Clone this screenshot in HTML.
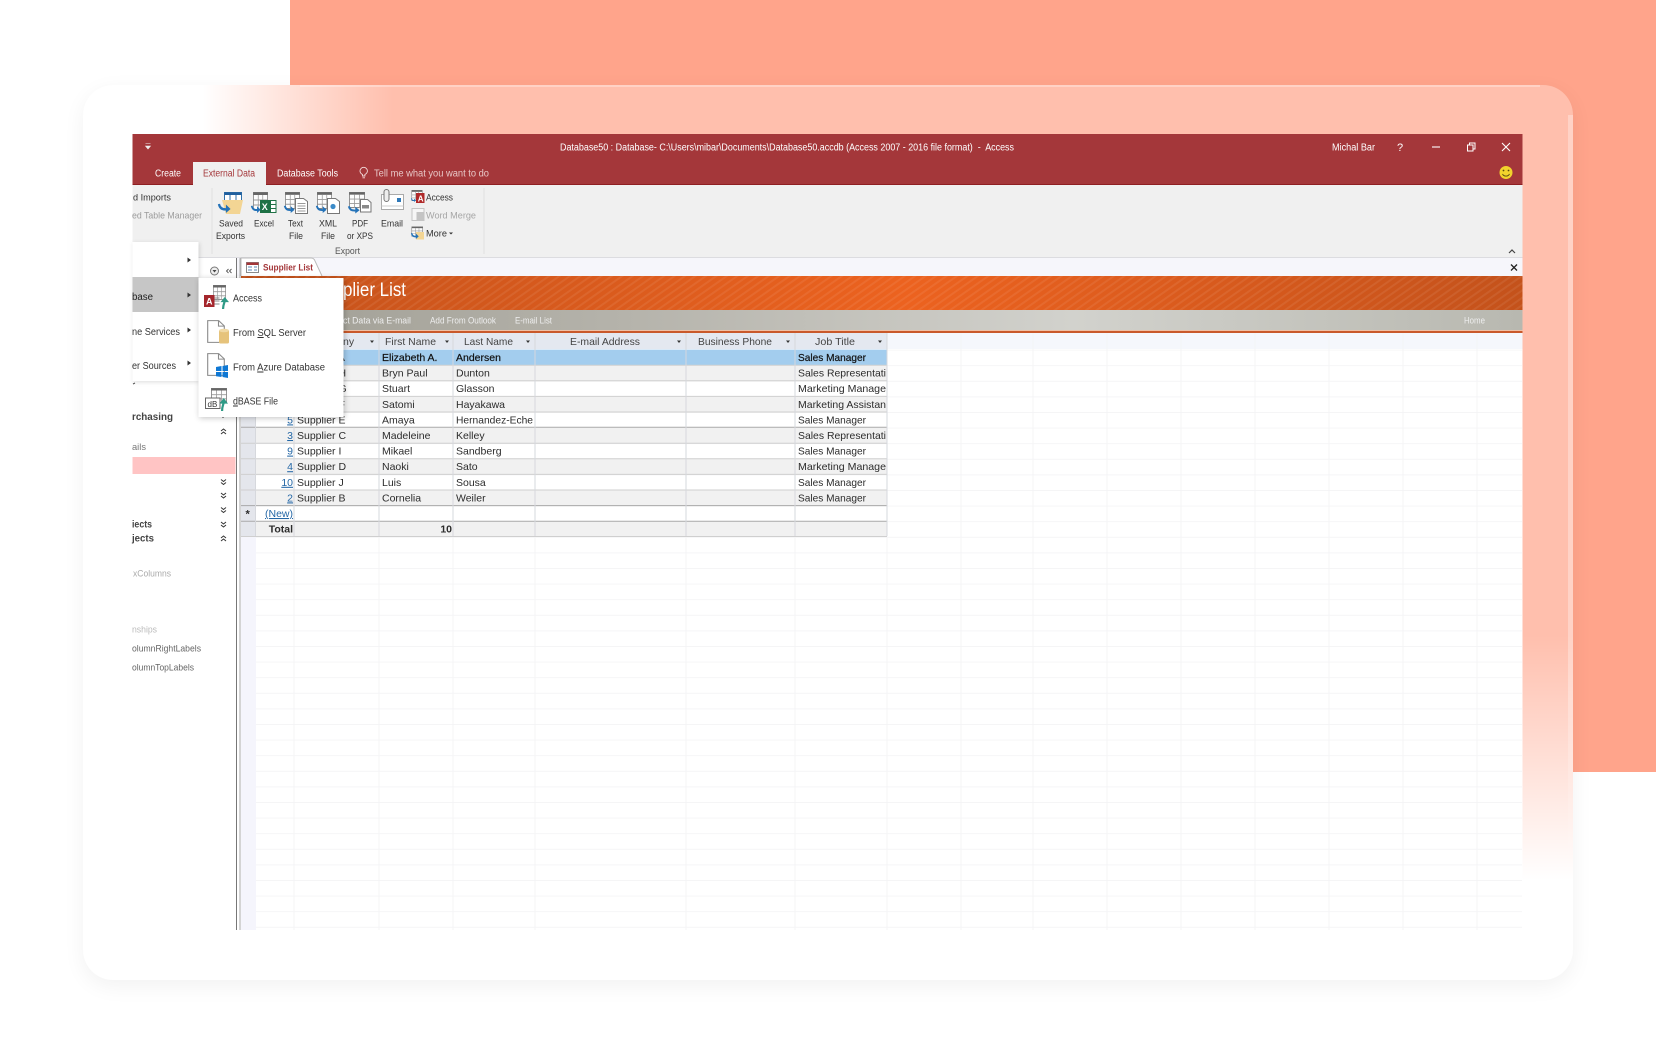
<!DOCTYPE html>
<html lang="en">
<head>
<meta charset="utf-8">
<title>Supplier List</title>
<style>
html,body{margin:0;padding:0;width:1656px;height:1062px;overflow:hidden;background:#fff}
#bg{position:absolute;left:290px;top:0;width:1366px;height:772px;background:#FFA48B}
#card{position:absolute;left:83px;top:85px;width:1490px;height:895px;border-radius:30px;
box-shadow:0 6px 22px rgba(0,0,0,.055);
background:
linear-gradient(to top,#fff 100px,rgba(255,255,255,0) 345px),
linear-gradient(to right,#fff 120px,rgba(255,255,255,0) 310px),
#FFBFAD}
#edge{position:absolute;left:1568px;top:115px;width:5px;height:770px;background:linear-gradient(to bottom,rgba(255,255,255,.3),rgba(255,255,255,.3) 75%,rgba(255,255,255,0))}
#edget{position:absolute;left:300px;top:85px;width:1240px;height:2px;background:rgba(255,255,255,.3)}
svg{position:absolute;left:0;top:0}
text{font-family:"Liberation Sans",Arial,sans-serif;font-size:10.5px;fill:#2c2c2c;white-space:pre}
.w{fill:#fff}
.r{font-size:9.5px;fill:#333}
.g{fill:#a3a3a3}
.h{fill:#444;font-size:10.5px}
.b{font-weight:bold}
.n{font-size:9.5px;fill:#444}
.l{fill:#2467a6;text-decoration:underline}
.m{font-size:10px;fill:#eee}
#all{filter:blur(.35px)}
</style>
</head>
<body>
<div id="bg"></div>
<div id="card"></div>
<div id="edge"></div>
<div id="edget"></div>
<svg width="1656" height="1062" viewBox="0 0 1656 1062" xmlns="http://www.w3.org/2000/svg">
<defs>
<linearGradient id="og"><stop offset="0" stop-color="#C4521B"/><stop offset=".52" stop-color="#EC621F"/><stop offset="1" stop-color="#C4521B"/></linearGradient>
<linearGradient id="gy"><stop offset="0" stop-color="#A09E94"/><stop offset=".3" stop-color="#B5B3AB"/><stop offset=".65" stop-color="#D2D2CD"/><stop offset="1" stop-color="#B8B8B0"/></linearGradient>
<pattern id="st" width="6" height="6" patternUnits="userSpaceOnUse" patternTransform="rotate(-35)"><rect width="6" height="2" fill="#fff" opacity=".07"/></pattern>
<pattern id="gr" width="74" height="15.6" patternUnits="userSpaceOnUse" y="349.6" x="0"><rect y="0" width="74" height="1" fill="#f5f5f6"/></pattern>
<symbol id="tb" viewBox="0 0 20 18" preserveAspectRatio="none" overflow="visible"><rect x=".5" y=".5" width="19" height="17" fill="#fdfdfd" stroke="#7a7a7a"/><rect x=".5" y=".5" width="19" height="2.500" fill="#666"/><path d="M.5 8h19M.5 13h19M7 3v15M13 3v15" stroke="#9a9a9a" fill="none"/></symbol>
<symbol id="ar" viewBox="0 0 14 10" preserveAspectRatio="none" overflow="visible"><path d="M1 1c1 5 5 6 10 5" stroke="#2472B8" stroke-width="2.400" fill="none"/><path d="M8.500 1.500l5 4.500-5 4z" fill="#2472B8"/></symbol>
<symbol id="up" viewBox="0 0 10 14" preserveAspectRatio="none" overflow="visible"><path d="M3 14C3 10 4 8 5 5" stroke="#2E9A86" stroke-width="2.600" fill="none"/><path d="M0 6l5-6 5 6z" fill="#2E9A86"/></symbol>
<symbol id="doc" viewBox="0 0 18 26" preserveAspectRatio="none" overflow="visible"><path d="M.7.7h11l5.600 6v18.600H.7z" fill="#fff" stroke="#8a8a8a" stroke-width="1.100"/><path d="M11.500.9v6h5.600" fill="none" stroke="#8a8a8a" stroke-width="1.100"/></symbol>
</defs>
<g id="all">
<!-- window base -->
<rect x="132.500" y="134" width="1390" height="796" fill="#fff"/>
<!-- title bar -->
<rect x="132.500" y="134" width="1390" height="51" fill="#A4373A"/>
<rect x="132.500" y="184" width="1390" height="1" fill="#8e1f22"/>
<path d="M145.500 143.500h5M145.500 146h5l-2.500 3z" fill="#eee" stroke="#eee" stroke-width=".6"/>
<text class="w" x="560" y="150.500" textLength="454" lengthAdjust="spacingAndGlyphs" style="font-size:10px">Database50 : Database- C:\Users\mibar\Documents\Database50.accdb (Access 2007 - 2016 file format)  -  Access</text>
<text class="w" x="1332" y="150.500" textLength="43" lengthAdjust="spacingAndGlyphs" style="font-size:10px">Michal Bar</text>
<text class="w" x="1397" y="151" style="font-size:11px">?</text>
<path d="M1432 147h8" stroke="#fff" stroke-width="1.100"/>
<path d="M1467.500 145h5.500v6h-5.500zM1469.500 145v-2h5.500v6h-2" stroke="#fff" fill="none" stroke-width="1"/>
<path d="M1502 143l8 8M1510 143l-8 8" stroke="#fff" stroke-width="1.100"/>
<circle cx="1506" cy="172.500" r="6.500" fill="#F2D32C"/><circle cx="1503.500" cy="170.500" r=".9" fill="#5a4a10"/><circle cx="1508.500" cy="170.500" r=".9" fill="#5a4a10"/><path d="M1502.500 174c1.500 2.800 5.500 2.800 7 0" stroke="#5a4a10" fill="none" stroke-width=".9"/>
<!-- tabs -->
<rect x="193" y="162" width="73" height="23.500" fill="#F0F0F0"/>
<text class="w" x="155" y="176.500" textLength="26" lengthAdjust="spacingAndGlyphs" style="font-size:10px">Create</text>
<text x="203" y="176.500" textLength="52" lengthAdjust="spacingAndGlyphs" style="font-size:10px;fill:#A4373A">External Data</text>
<text class="w" x="277" y="176.500" textLength="61" lengthAdjust="spacingAndGlyphs" style="font-size:10px">Database Tools</text>
<path d="M362.500 176v-1.500c-2-1-2.500-2.500-2.500-3.500a3.700 3.700 0 0 1 7.400 0c0 1-.5 2.500-2.500 3.500v1.500zM362.500 177.800h2.500" stroke="#f3dcdc" fill="none" stroke-width=".9"/>
<text x="374" y="176.500" textLength="115" lengthAdjust="spacingAndGlyphs" style="font-size:10px;fill:#E8C8C8">Tell me what you want to do</text>
<!-- ribbon -->
<rect x="132.500" y="185" width="1390" height="72" fill="#F0F0F0"/>
<rect x="132.500" y="257" width="1390" height="1" fill="#dcdce0"/>
<rect x="132.500" y="258" width="1390" height="18" fill="#F6F6FB"/>
<path d="M212 188v66M484 188v66" stroke="#e0e0e0"/>
<text class="r" x="133" y="200.500" textLength="38" lengthAdjust="spacingAndGlyphs">d Imports</text>
<text class="r g" x="132" y="218.500" textLength="70" lengthAdjust="spacingAndGlyphs" style="fill:#9b9b9b">ed Table Manager</text>
<!-- saved exports -->
<rect x="224.500" y="192.500" width="17" height="9" fill="#fff" stroke="#2F6FA8"/><rect x="224.500" y="192.500" width="17" height="2.500" fill="#1F5F9E"/><path d="M230 195v6M236 195v6" stroke="#2F6FA8"/>
<path d="M222 200h21l-3 14h-14z" fill="#F3D594"/>
<use href="#ar" x="218" y="203" width="13" height="10"/>
<!-- excel -->
<use href="#tb" x="253" y="192" width="15" height="18"/><rect x="260" y="200" width="10" height="13" fill="#1E7145"/><text x="261.800" y="210" style="font-size:9px;font-weight:bold;fill:#fff">X</text><path d="M270.500 200.500h5.500v12h-5.500zM270.500 204.500h5.500M270.500 208.500h5.500" stroke="#1E7145" fill="#fff"/><use href="#ar" x="251" y="205" width="10" height="8"/>
<!-- text -->
<use href="#tb" x="285" y="192" width="15" height="17"/><path d="M295.500 198.500h8l4 3v12h-12z" fill="#fff" stroke="#777"/><path d="M297.500 203.500h8M297.500 206h8M297.500 208.500h8M297.500 211h8" stroke="#999"/><use href="#ar" x="284" y="205" width="11" height="8"/>
<!-- xml -->
<use href="#tb" x="317" y="192" width="15" height="17"/><path d="M327.500 198.500h8l4 3v12h-12z" fill="#fff" stroke="#777"/><circle cx="333" cy="206.500" r="2.600" fill="#3B8BC9"/><use href="#ar" x="316" y="205" width="11" height="8"/>
<!-- pdf -->
<use href="#tb" x="349" y="192" width="16" height="16"/><path d="M360.500 199.500h7l3.500 3v9.500h-10.500z" fill="#fff" stroke="#777"/><rect x="362" y="205" width="7" height="3.500" fill="#888"/><use href="#ar" x="348" y="205.500" width="12" height="8"/>
<!-- email -->
<rect x="381.500" y="194.500" width="22" height="15" fill="#fff" stroke="#aaa"/><path d="M381.500 206h22" stroke="#ccc"/><rect x="397" y="198" width="4" height="4" fill="#2F79B9"/><path d="M384 196v-4a2.500 2.500 0 0 1 5 0v7a2.500 2.500 0 0 1-5 0v-3" fill="#eee" stroke="#777"/>
<!-- small ribbon -->
<use href="#tb" x="411.500" y="190" width="11" height="11"/><rect x="416" y="193" width="8.500" height="10" fill="#B02A2A"/><text x="417.800" y="201.500" style="font-size:8px;font-weight:bold;fill:#fff">A</text><use href="#ar" x="411" y="198" width="5" height="4"/>
<rect x="412" y="208.500" width="12" height="12" fill="#f6f6f6" stroke="#c4c4c4"/><rect x="416.500" y="212" width="7.500" height="9" fill="#c4c4c4"/>
<use href="#tb" x="411.500" y="226.500" width="11.500" height="10"/><rect x="416" y="232" width="8" height="7.500" fill="#F3D594"/><use href="#ar" x="411" y="232.500" width="8" height="6.500"/>
<text class="r" x="426" y="200.500" textLength="27" lengthAdjust="spacingAndGlyphs">Access</text>
<text class="r" x="426" y="218.500" textLength="50" lengthAdjust="spacingAndGlyphs" style="fill:#a5a5a5">Word Merge</text>
<text class="r" x="426" y="236.500" textLength="21" lengthAdjust="spacingAndGlyphs">More</text>
<path d="M449 232.500h4l-2 2z" fill="#333"/>
<text class="r" x="219" y="226.500" textLength="24" lengthAdjust="spacingAndGlyphs">Saved</text>
<text class="r" x="216" y="239" textLength="29" lengthAdjust="spacingAndGlyphs">Exports</text>
<text class="r" x="254" y="226.500" textLength="20" lengthAdjust="spacingAndGlyphs">Excel</text>
<text class="r" x="288" y="226.500" textLength="15" lengthAdjust="spacingAndGlyphs">Text</text>
<text class="r" x="289" y="239" textLength="14" lengthAdjust="spacingAndGlyphs">File</text>
<text class="r" x="319" y="226.500" textLength="18" lengthAdjust="spacingAndGlyphs">XML</text>
<text class="r" x="321" y="239" textLength="14" lengthAdjust="spacingAndGlyphs">File</text>
<text class="r" x="352" y="226.500" textLength="16" lengthAdjust="spacingAndGlyphs">PDF</text>
<text class="r" x="347" y="239" textLength="26" lengthAdjust="spacingAndGlyphs">or XPS</text>
<text class="r" x="381" y="226.500" textLength="22" lengthAdjust="spacingAndGlyphs">Email</text>
<text class="r" x="335" y="254" textLength="25" lengthAdjust="spacingAndGlyphs" style="fill:#555">Export</text>
<path d="M1509 253l3-3 3 3" stroke="#444" fill="none" stroke-width="1.200"/>
<path d="M1511 264.500l6 6M1517 264.500l-6 6" stroke="#222" stroke-width="1.300"/>
<!-- object tab -->
<path d="M241 276v-18h70q3 0 4 3l7 15" fill="#fff" stroke="#bbb"/>
<rect x="246.500" y="262.500" width="12" height="10" fill="#fff" stroke="#8a8a8a"/><rect x="246.500" y="262.500" width="12" height="2.500" fill="#A4373A"/><path d="M248 267h4M254 267h3M248 270h4M254 270h3" stroke="#5b87b5"/>
<text class="b" x="263" y="270.500" textLength="50" lengthAdjust="spacingAndGlyphs" style="font-size:9.500px;fill:#A4373A">Supplier List</text>
<!-- form header -->
<rect x="241" y="276" width="1281.500" height="34" fill="url(#og)"/>
<rect x="241" y="276" width="1281.500" height="34" fill="url(#st)"/>
<text x="343" y="296" textLength="63" lengthAdjust="spacingAndGlyphs" style="font-size:19px;fill:#fff">plier List</text>
<rect x="241" y="310" width="1281.500" height="20" fill="url(#gy)"/>
<rect x="241" y="330" width="1281.500" height="1" fill="#EFC0A5"/>
<rect x="241" y="331" width="1281.500" height="2" fill="#C9592B"/>
<text class="m" x="343" y="323.500" textLength="68" lengthAdjust="spacingAndGlyphs" style="font-size:9px">ct Data via E-mail</text>
<text class="m" x="430" y="323.500" textLength="66" lengthAdjust="spacingAndGlyphs" style="font-size:9px">Add From Outlook</text>
<text class="m" x="515" y="323.500" textLength="37" lengthAdjust="spacingAndGlyphs" style="font-size:9px">E-mail List</text>
<text class="m" x="1464" y="323.500" textLength="21" lengthAdjust="spacingAndGlyphs" style="font-size:9px">Home</text>
<!-- faint grid -->
<rect x="241" y="333" width="1281.500" height="16" fill="#F5F7FC"/>
<rect x="241" y="333" width="15" height="597" fill="#F5F5FC"/>
<rect x="256" y="349.600" width="1266" height="580" fill="url(#gr)"/>
<path d="M294 536v394M379 536v394M453 536v394M535 536v394M686 536v394M795 536v394M887 333v597M961 333v597M1033 333v597M1107 333v597M1181 333v597M1255 333v597M1329 333v597M1403 333v597M1477 333v597" stroke="#f4f4f6"/>
<!-- table -->
<rect x="241" y="333" width="646" height="16" fill="#E4E8F0"/>
<rect x="241" y="349.600" width="15" height="186.400" fill="#E4E6EC"/>
<g fill="#F1F1F1">
<rect x="256" y="365.200" width="631" height="15.600"/><rect x="256" y="396.400" width="631" height="15.600"/><rect x="256" y="427.600" width="631" height="15.600"/><rect x="256" y="458.800" width="631" height="15.600"/><rect x="256" y="490" width="631" height="15.600"/><rect x="256" y="521.200" width="631" height="15.600"/>
</g>
<rect x="256" y="349.600" width="631" height="15.600" fill="#A3CDEE"/>
<g stroke="#cfcfcf" fill="none">
<path d="M241 365.200h646M241 380.800h646M241 396.400h646M241 412h646M241 443.200h646M241 458.800h646M241 474.400h646M241 490h646"/>
</g>
<g stroke="#a9a9a9" fill="none"><path d="M241 427.200h646M241 505.600h646M241 521.200h646"/></g>
<path d="M241 536.500h646" stroke="#cfcfcf"/>
<path d="M255.500 333v203M294 349v187M379 333v203M453 333v203M535 333v203M686 333v203M795 333v203M887 333v203" stroke="#d6d8dd"/>
<g>
<text class="h" x="343" y="345">ny</text>
<text class="h" x="385" y="345" textLength="51" lengthAdjust="spacingAndGlyphs">First Name</text>
<text class="h" x="464" y="345" textLength="49" lengthAdjust="spacingAndGlyphs">Last Name</text>
<text class="h" x="570" y="345" textLength="70" lengthAdjust="spacingAndGlyphs">E-mail Address</text>
<text class="h" x="698" y="345" textLength="74" lengthAdjust="spacingAndGlyphs">Business Phone</text>
<text class="h" x="815" y="345" textLength="40" lengthAdjust="spacingAndGlyphs">Job Title</text>
</g>
<path d="M370 340.500h4l-2 2.500zM445 340.500h4l-2 2.500zM526 340.500h4l-2 2.500zM677 340.500h4l-2 2.500zM786 340.500h4l-2 2.500zM878 340.500h4l-2 2.500z" fill="#333"/>
<!-- rows -->
<g>
<text class="l" x="293" y="361" text-anchor="end">1</text><text x="297" y="361" style="fill:#111">Supplier A</text><text x="382" y="361" style="fill:#111;stroke:#111;stroke-width:.2">Elizabeth A.</text><text x="456" y="361" style="fill:#111;stroke:#111;stroke-width:.2">Andersen</text><text x="798" y="361" style="fill:#111;stroke:#111;stroke-width:.2" textLength="68" lengthAdjust="spacingAndGlyphs">Sales Manager</text>
<text class="l" x="293" y="376.600" text-anchor="end">8</text><text x="297" y="376.600">Supplier H</text><text x="382" y="376.600">Bryn Paul</text><text x="456" y="376.600">Dunton</text><text x="798" y="376.600" textLength="88" lengthAdjust="spacingAndGlyphs">Sales Representati</text>
<text class="l" x="293" y="392.200" text-anchor="end">7</text><text x="297" y="392.200">Supplier G</text><text x="382" y="392.200">Stuart</text><text x="456" y="392.200">Glasson</text><text x="798" y="392.200" textLength="88" lengthAdjust="spacingAndGlyphs">Marketing Manage</text>
<text class="l" x="293" y="407.800" text-anchor="end">6</text><text x="297" y="407.800">Supplier F</text><text x="382" y="407.800">Satomi</text><text x="456" y="407.800">Hayakawa</text><text x="798" y="407.800" textLength="88" lengthAdjust="spacingAndGlyphs">Marketing Assistan</text>
<text class="l" x="293" y="423.400" text-anchor="end">5</text><text x="297" y="423.400">Supplier E</text><text x="382" y="423.400">Amaya</text><text x="456" y="423.400" textLength="77" lengthAdjust="spacingAndGlyphs">Hernandez-Eche</text><text x="798" y="423.400" textLength="68" lengthAdjust="spacingAndGlyphs">Sales Manager</text>
<text class="l" x="293" y="439" text-anchor="end">3</text><text x="297" y="439">Supplier C</text><text x="382" y="439">Madeleine</text><text x="456" y="439">Kelley</text><text x="798" y="439" textLength="88" lengthAdjust="spacingAndGlyphs">Sales Representati</text>
<text class="l" x="293" y="454.600" text-anchor="end">9</text><text x="297" y="454.600">Supplier I</text><text x="382" y="454.600">Mikael</text><text x="456" y="454.600">Sandberg</text><text x="798" y="454.600" textLength="68" lengthAdjust="spacingAndGlyphs">Sales Manager</text>
<text class="l" x="293" y="470.200" text-anchor="end">4</text><text x="297" y="470.200">Supplier D</text><text x="382" y="470.200">Naoki</text><text x="456" y="470.200">Sato</text><text x="798" y="470.200" textLength="88" lengthAdjust="spacingAndGlyphs">Marketing Manage</text>
<text class="l" x="293" y="485.800" text-anchor="end">10</text><text x="297" y="485.800">Supplier J</text><text x="382" y="485.800">Luis</text><text x="456" y="485.800">Sousa</text><text x="798" y="485.800" textLength="68" lengthAdjust="spacingAndGlyphs">Sales Manager</text>
<text class="l" x="293" y="501.400" text-anchor="end">2</text><text x="297" y="501.400">Supplier B</text><text x="382" y="501.400">Cornelia</text><text x="456" y="501.400">Weiler</text><text x="798" y="501.400" textLength="68" lengthAdjust="spacingAndGlyphs">Sales Manager</text>
<text x="245.500" y="517.500" style="font-size:11px;font-weight:bold">*</text><text class="l" x="293" y="517" text-anchor="end">(New)</text>
<text class="b" x="293" y="532.600" text-anchor="end">Total</text><text class="b" x="452" y="532.600" text-anchor="end">10</text>
</g>
<!-- nav pane -->
<rect x="132.500" y="258" width="103.500" height="672" fill="#fff"/>
<path d="M236.500 258v672" stroke="#777" stroke-width="1"/><path d="M240 258v672" stroke="#aaa" stroke-width="1"/>
<circle cx="214.500" cy="271" r="4" fill="#eee" stroke="#777"/><path d="M212.500 270h4l-2 2.500z" fill="#444"/>
<path d="M228.500 269l-2 2 2 2M231.500 269l-2 2 2 2" stroke="#555" fill="none" stroke-width=".9"/>
<rect x="132.500" y="457" width="103" height="17" fill="#FFC4C4"/>
<path d="M133 384l2-1" stroke="#555"/><path d="M222 417h2" stroke="#333"/>
<path d="M221 431l2.500-2 2.500 2M221 434l2.500-2 2.500 2M221 538l2.500-2 2.500 2M221 541l2.500-2 2.500 2" stroke="#333" fill="none"/>
<path d="M221 479.500l2.500 2 2.500-2M221 482.500l2.500 2 2.500-2M221 493l2.500 2 2.500-2M221 496l2.500 2 2.500-2M221 507.500l2.500 2 2.500-2M221 510.500l2.500 2 2.500-2M221 522l2.500 2 2.500-2M221 525l2.500 2 2.500-2" stroke="#333" fill="none"/>
<text x="132" y="420" class="b" textLength="41" lengthAdjust="spacingAndGlyphs" style="font-size:10px;fill:#444">rchasing</text>
<text class="n" x="132" y="450" textLength="14" lengthAdjust="spacingAndGlyphs" style="fill:#777">ails</text>
<text class="b" x="132" y="527.500" textLength="20" lengthAdjust="spacingAndGlyphs" style="font-size:10px;fill:#444">iects</text>
<text class="b" x="132" y="541.500" textLength="22" lengthAdjust="spacingAndGlyphs" style="font-size:10px;fill:#444">jects</text>
<text class="n" x="133" y="576.500" textLength="38" lengthAdjust="spacingAndGlyphs" style="fill:#aaa">xColumns</text>
<text class="n" x="132" y="632.500" textLength="25" lengthAdjust="spacingAndGlyphs" style="fill:#bbb">nships</text>
<text class="n" x="132" y="651.500" textLength="69" lengthAdjust="spacingAndGlyphs" style="fill:#666">olumnRightLabels</text>
<text class="n" x="132" y="670.500" textLength="62" lengthAdjust="spacingAndGlyphs" style="fill:#666">olumnTopLabels</text>
<!-- flyout 1 -->
<g style="filter:drop-shadow(1px 1px 2px rgba(0,0,0,.14))">
<rect x="132.500" y="242" width="66" height="139" fill="#fff"/>
</g>
<rect x="132.500" y="277" width="66" height="35" fill="#C6C6C6"/>
<path d="M187.500 257.500l3.500 2.500-3.500 2.500zM187.500 292.500l3.500 2.500-3.500 2.500zM187.500 327.500l3.500 2.500-3.500 2.500zM187.500 360.500l3.500 2.500-3.500 2.500z" fill="#333"/>
<text class="n" x="132" y="300" textLength="21" lengthAdjust="spacingAndGlyphs" style="font-size:10px;fill:#222">base</text>
<text class="n" x="132" y="335" textLength="48" lengthAdjust="spacingAndGlyphs" style="font-size:10px;fill:#333">ne Services</text>
<text class="n" x="132" y="369" textLength="44" lengthAdjust="spacingAndGlyphs" style="font-size:10px;fill:#333">er Sources</text>
<!-- flyout 2 -->
<g style="filter:drop-shadow(1px 1px 3px rgba(0,0,0,.24))">
<rect x="198.500" y="278" width="145" height="139" fill="#fff"/>
</g>
<!-- access icon -->
<use href="#tb" x="213" y="285" width="13" height="15"/>
<path d="M214.500 298h5M214.500 301h5M214.500 304h5" stroke="#888"/>
<rect x="204" y="295" width="10.500" height="12" fill="#A4262C"/><text x="206" y="304.500" style="font-size:9px;font-weight:bold;fill:#fff">A</text>
<use href="#up" x="220.500" y="297" width="8.500" height="12"/>
<!-- sql icon -->
<use href="#doc" x="207" y="320" width="18" height="23"/>
<rect x="219" y="330" width="10" height="13.500" rx="1.500" fill="#E6C37B"/><ellipse cx="224" cy="330.500" rx="5" ry="1.700" fill="#F0D9A5"/>
<!-- azure icon -->
<use href="#doc" x="207" y="353" width="18" height="23"/>
<path d="M216 367l5.500-1v5h-5.500zM222.500 366l5.500-1v6h-5.500zM216 372h5.500v5l-5.500-.8zM222.500 372h5.500v6l-5.500-1z" fill="#0F78D4"/>
<!-- dbase icon -->
<use href="#tb" x="211" y="388" width="16" height="15"/>
<rect x="205.500" y="398" width="14.500" height="10.500" fill="#fff" stroke="#666"/>
<text x="207.500" y="406.800" style="font-size:8px;fill:#333">dB</text>
<use href="#up" x="219.500" y="398" width="8.500" height="13"/>
<text x="233" y="301.500" textLength="29" lengthAdjust="spacingAndGlyphs" style="font-size:10px;fill:#333">Access</text>
<text x="233" y="336" textLength="73" lengthAdjust="spacingAndGlyphs" style="font-size:10px;fill:#333">From <tspan text-decoration="underline">S</tspan>QL Server</text>
<text x="233" y="370.500" textLength="92" lengthAdjust="spacingAndGlyphs" style="font-size:10px;fill:#333">From <tspan text-decoration="underline">A</tspan>zure Database</text>
<text x="233" y="404.500" textLength="45" lengthAdjust="spacingAndGlyphs" style="font-size:10px;fill:#333"><tspan text-decoration="underline">d</tspan>BASE File</text>
</g>
</svg>
</body>
</html>
